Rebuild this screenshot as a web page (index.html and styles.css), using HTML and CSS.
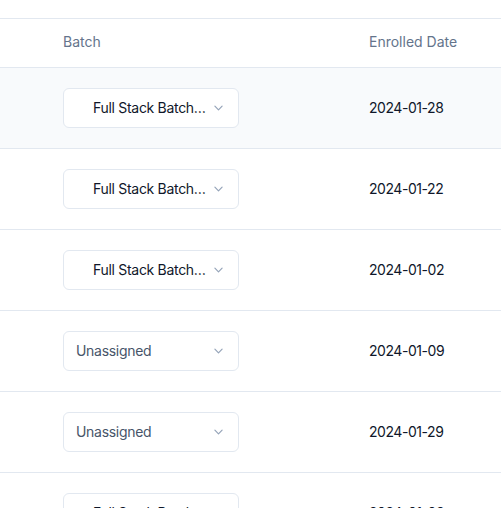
FILE: index.html
```html
<!DOCTYPE html>
<html>
<head>
<meta charset="utf-8">
<link rel="stylesheet" href="styles.css">
</head>
<body>
<div class="table">
  <div class="row head">
    <div class="cell c-batch">Batch</div>
    <div class="cell c-date">Enrolled Date</div>
  </div>
  <div class="row hover">
    <div class="cell c-batch"><div class="select"><span class="val assigned">Full Stack Batch 2024</span><svg class="chev" viewBox="0 0 10 6"><path d="M1 1l4 4 4-4"/></svg></div></div>
    <div class="cell c-date">2024-01-28</div>
  </div>
  <div class="row">
    <div class="cell c-batch"><div class="select"><span class="val assigned">Full Stack Batch 2024</span><svg class="chev" viewBox="0 0 10 6"><path d="M1 1l4 4 4-4"/></svg></div></div>
    <div class="cell c-date">2024-01-22</div>
  </div>
  <div class="row">
    <div class="cell c-batch"><div class="select"><span class="val assigned">Full Stack Batch 2024</span><svg class="chev" viewBox="0 0 10 6"><path d="M1 1l4 4 4-4"/></svg></div></div>
    <div class="cell c-date">2024-01-02</div>
  </div>
  <div class="row">
    <div class="cell c-batch"><div class="select"><span class="val empty">Unassigned</span><svg class="chev" viewBox="0 0 10 6"><path d="M1 1l4 4 4-4"/></svg></div></div>
    <div class="cell c-date">2024-01-09</div>
  </div>
  <div class="row">
    <div class="cell c-batch"><div class="select"><span class="val empty">Unassigned</span><svg class="chev" viewBox="0 0 10 6"><path d="M1 1l4 4 4-4"/></svg></div></div>
    <div class="cell c-date">2024-01-29</div>
  </div>
  <div class="row">
    <div class="cell c-batch"><div class="select"><span class="val assigned">Full Stack Batch 2024</span><svg class="chev" viewBox="0 0 10 6"><path d="M1 1l4 4 4-4"/></svg></div></div>
    <div class="cell c-date">2024-01-03</div>
  </div>
</div>
</body>
</html>
```
FILE: styles.css
```css
html, body {
  margin: 0;
  padding: 0;
  background: #ffffff;
  overflow: hidden;
  height: 508px;
}
body {
  font-family: Inter, "Noto Sans", sans-serif;
  font-size: 14px;
  color: #0f172a;
  padding-top: 18px;
}
.table {
  border-top: 1px solid #e2e8f0;
}
.row {
  display: grid;
  grid-template-columns: 369px 1fr;
  border-bottom: 1px solid #e2e8f0;
  height: 80px;
  align-items: center;
}
.row.head {
  height: 48px;
  color: #64748b;
}
.row.head .cell {
  padding-bottom: 3px;
  letter-spacing: 0;
}
.row.hover {
  background: #f8fafc;
}
.c-batch {
  padding-left: 63px;
}
.c-date {
  letter-spacing: -0.45px;
  padding-bottom: 2px;
}
.select {
  box-sizing: border-box;
  width: 176px;
  height: 40px;
  border: 1px solid #e2e8f0;
  border-radius: 6px;
  background: #ffffff;
  display: flex;
  align-items: center;
  padding-right: 15px;
}
.val {
  flex: 1;
  white-space: nowrap;
  overflow: hidden;
  text-overflow: ellipsis;
  min-width: 0;
  padding-bottom: 2px;
  letter-spacing: -0.3px;
}
.val.assigned {
  padding-left: 29px;
  margin-right: 5px;
  color: #0f172a;
}
.val.empty {
  padding-left: 12px;
  color: #475569;
}
.chev {
  width: 9px;
  height: 6px;
  flex: none;
  fill: none;
  stroke: #94a3b8;
  stroke-width: 1.3;
  stroke-linecap: round;
  stroke-linejoin: round;
}
```
